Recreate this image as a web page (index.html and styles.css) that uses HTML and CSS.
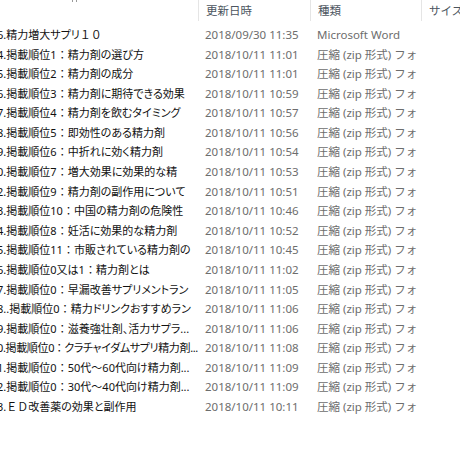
FILE: index.html
```html
<!DOCTYPE html>
<html lang="ja">
<head>
  <meta charset="UTF-8" />
  <title>Explorer</title>
  <link rel="stylesheet" href="styles.css">
</head>
<body>

  <div class="file-list">
    <div class="header">
      <div class="col name"><span class="sort-mark"></span></div>
      <div class="col date">更新日時</div>
      <div class="col type">種類</div>
      <div class="col size">サイズ</div>
    </div>

    <div id="rows"></div>
  </div>

  <script src="script.js"></script>
</body>
</html>
```

FILE: styles.css
```css
body {
  margin: 0;
  background: #ffffff;
  font-family: "Noto Sans", "Noto Sans CJK JP", sans-serif;
  font-size: 11.5px;
  overflow: hidden;
}

.file-list {
  width: 460px;
}

.header,
.row {
  display: grid;
  grid-template-columns: 198px 112px 111px 39px;
}

.header {
  height: 25px;
  color: #4c5560;
}

.header .col {
  height: 21px;
  line-height: 21px;
  padding-left: 7px;
  border-left: 1px solid #e5e5e5;
  white-space: nowrap;
  overflow: hidden;
}

.header .name {
  border-left: none;
  position: relative;
}

.sort-mark {
  position: absolute;
  left: 72px;
  top: 0;
  width: 5px;
  height: 2px;
  border-left: 1px solid #9a9a9a;
  border-right: 1px solid #9a9a9a;
  box-sizing: border-box;
}

.row {
  height: 19.58px;
  line-height: 19.58px;
  white-space: nowrap;
}

.row .col {
  overflow: hidden;
}

.row .name {
  color: #111;
  font-size: 11px;
  font-feature-settings: "palt";
  text-indent: -3px;
}

.row .name.tight {
  letter-spacing: -0.35px;
}

/* full-width latin keeps its em box */
.fw {
  font-feature-settings: normal;
  letter-spacing: 0;
}

.row .date,
.row .type {
  color: #6d6d6d;
  padding-left: 7px;
}
```

FILE: script.js
```javascript
const files = [
  ["6.精力増大サプリ<span class='fw'>１０</span>", "2018/09/30 11:35", "Microsoft Word"],
  ["4.掲載順位1 ： 精力剤の選び方", "2018/10/11 11:01"],
  ["5.掲載順位2 ： 精力剤の成分", "2018/10/11 11:01"],
  ["6.掲載順位3 ： 精力剤に期待できる効果", "2018/10/11 10:59"],
  ["7.掲載順位4 ： 精力剤を飲むタイミング", "2018/10/11 10:57"],
  ["8.掲載順位5 ： 即効性のある精力剤", "2018/10/11 10:56"],
  ["9.掲載順位6 ： 中折れに効く精力剤", "2018/10/11 10:54"],
  ["0.掲載順位7 ： 増大効果に効果的な精", "2018/10/11 10:53"],
  ["2.掲載順位9 ： 精力剤の副作用について", "2018/10/11 10:51"],
  ["3.掲載順位10 ： 中国の精力剤の危険性", "2018/10/11 10:46"],
  ["4.掲載順位8 ： 妊活に効果的な精力剤", "2018/10/11 10:52"],
  ["5.掲載順位11 ： 市販されている精力剤の", "2018/10/11 10:45"],
  ["6.掲載順位0又は1 ： 精力剤とは", "2018/10/11 11:02"],
  ["7.掲載順位0 ： 早漏改善サプリメントラン", "2018/10/11 11:05"],
  ["8..掲載順位0 ： 精力ドリンクおすすめラン", "2018/10/11 11:06"],
  ["9.掲載順位0 ： 滋養強壮剤、活力サプラ...", "2018/10/11 11:06"],
  ["0.掲載順位0 ： クラチャイダムサプリ精力剤...", "2018/10/11 11:08", null, true],
  ["1.掲載順位0 ： 50代～60代向け精力剤...", "2018/10/11 11:09"],
  ["2.掲載順位0 ： 30代～40代向け精力剤...", "2018/10/11 11:09"],
  ["3.<span class='fw'>ＥＤ</span>改善薬の効果と副作用", "2018/10/11 10:11"]
];

const rows = document.getElementById("rows");

files.forEach(function (f) {
  const row = document.createElement("div");
  row.className = "row";
  row.innerHTML =
    '<div class="col name' + (f[3] ? ' tight' : '') + '">' + f[0] + '</div>' +
    '<div class="col date">' + f[1] + '</div>' +
    '<div class="col type">' + (f[2] || "圧縮 (zip 形式) フォ") + '</div>' +
    '<div class="col size"></div>';
  rows.appendChild(row);
});
```
